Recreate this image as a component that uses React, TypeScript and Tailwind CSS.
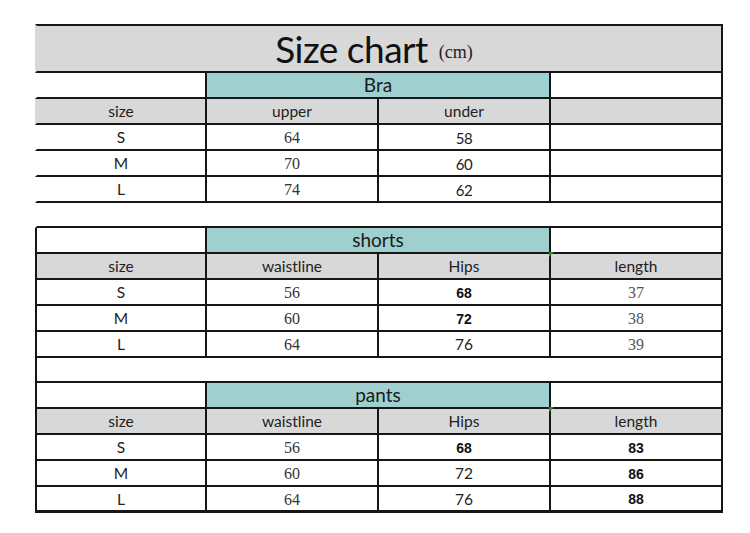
const LINE = "border-[#161616]";

type Cell = { text?: string; kind?: "sans" | "serif" | "bold" | "cond" | "grayserif" };

function CellText({ cell }: { cell: Cell }) {
  if (!cell.text) return null;
  const k = cell.kind ?? "sans";
  const cls =
    k === "serif"
      ? "font-['Liberation_Serif',serif] text-[16px] text-[#333]"
      : k === "grayserif"
      ? "font-['Liberation_Serif',serif] text-[16px] text-[#555]"
      : k === "bold"
      ? "font-['Liberation_Sans',sans-serif] font-bold text-[14px] text-[#111]"
      : k === "cond"
      ? "font-['Lato',sans-serif] text-[15px] tracking-[-0.5px] text-[#222]"
      : "font-['Lato',sans-serif] text-[15.5px] text-[#222]";
  return <span className={cls}>{cell.text}</span>;
}

function Row({
  cells,
  gray = false,
  leftLine = true,
  last = false,
  marker = false,
}: {
  cells: Cell[];
  gray?: boolean;
  leftLine?: boolean;
  last?: boolean;
  marker?: boolean;
}) {
  return (
    <div
      className={`flex h-[26px] border-r-2 border-l-2 ${LINE} ${last ? "border-b-[3px]" : "border-b-2"} ${
        leftLine ? "" : "border-l-transparent"
      } ${gray ? "bg-[#d8d8d8]" : "bg-white"}`}
    >
      <div className="w-[168px] flex items-center justify-center pt-[2px]">
        <CellText cell={cells[0]} />
      </div>
      <div className={`w-[172px] border-l-2 ${LINE} flex items-center justify-center pt-[2px]`}>
        <CellText cell={cells[1]} />
      </div>
      <div className={`w-[172px] border-l-2 ${LINE} flex items-center justify-center pt-[2px]`}>
        <CellText cell={cells[2]} />
      </div>
      <div className={`relative w-[172px] border-l-2 ${LINE} flex items-center justify-center pt-[2px]`}>
        {marker && (
          <span className="absolute -left-[2px] -top-[2px] w-0 h-0 border-t-[5px] border-t-[#2e8b2e] border-r-[5px] border-r-transparent" />
        )}
        <CellText cell={cells[3]} />
      </div>
    </div>
  );
}

function SectionHead({ label, leftLine = true }: { label: string; leftLine?: boolean }) {
  return (
    <div
      className={`flex h-[26px] border-r-2 border-l-2 border-b-2 ${LINE} ${leftLine ? "" : "border-l-transparent"} bg-white`}
    >
      <div className="w-[168px]" />
      <div
        className={`w-[344px] border-l-2 ${LINE} bg-[#9fd0cf] flex items-center justify-center font-['Lato',sans-serif] text-[19px] text-[#1a1a1a]`}
      >
        {label}
      </div>
      <div className={`w-[172px] border-l-2 ${LINE}`} />
    </div>
  );
}

function Gap({ leftLine }: { leftLine: boolean }) {
  return (
    <div
      className={`h-[25px] border-r-2 border-l-2 border-b-2 ${LINE} ${leftLine ? "" : "border-l-transparent"} bg-white`}
    />
  );
}

export default function App() {
  return (
    <div className="w-[750px] h-[533px] bg-white pt-[24px] pl-[35px]">
      <div className="w-[688px]">
        <div
          className={`h-[49px] border-t-2 border-b-2 border-r-2 border-l-2 border-l-transparent ${LINE} bg-[#d8d8d8] flex items-center justify-center pr-[10px] pt-[1px]`}
        >
          <span className="font-['Lato',sans-serif] text-[37px] text-[#111] tracking-[-0.5px]">Size chart</span>
          <span className="ml-[11px] mt-[7px] font-['Liberation_Serif',serif] text-[18px] text-[#222]">(cm)</span>
        </div>

        <SectionHead label="Bra" leftLine={false} />
        <Row gray leftLine={false} cells={[{ text: "size" }, { text: "upper" }, { text: "under" }, {}]} />
        <Row leftLine={false} cells={[{ text: "S" }, { text: "64", kind: "serif" }, { text: "58", kind: "cond" }, {}]} />
        <Row leftLine={false} cells={[{ text: "M" }, { text: "70", kind: "serif" }, { text: "60", kind: "cond" }, {}]} />
        <Row leftLine={false} cells={[{ text: "L" }, { text: "74", kind: "serif" }, { text: "62", kind: "cond" }, {}]} />
        <Gap leftLine={false} />

        <SectionHead label="shorts" />
        <Row gray marker cells={[{ text: "size" }, { text: "waistline" }, { text: "Hips" }, { text: "length" }]} />
        <Row cells={[{ text: "S" }, { text: "56", kind: "serif" }, { text: "68", kind: "bold" }, { text: "37", kind: "grayserif" }]} />
        <Row cells={[{ text: "M" }, { text: "60", kind: "serif" }, { text: "72", kind: "bold" }, { text: "38", kind: "grayserif" }]} />
        <Row cells={[{ text: "L" }, { text: "64", kind: "serif" }, { text: "76" }, { text: "39", kind: "grayserif" }]} />
        <Gap leftLine />

        <SectionHead label="pants" />
        <Row gray marker cells={[{ text: "size" }, { text: "waistline" }, { text: "Hips" }, { text: "length" }]} />
        <Row cells={[{ text: "S" }, { text: "56", kind: "serif" }, { text: "68", kind: "bold" }, { text: "83", kind: "bold" }]} />
        <Row cells={[{ text: "M" }, { text: "60", kind: "serif" }, { text: "72" }, { text: "86", kind: "bold" }]} />
        <Row last cells={[{ text: "L" }, { text: "64", kind: "serif" }, { text: "76" }, { text: "88", kind: "bold" }]} />
      </div>
    </div>
  );
}
